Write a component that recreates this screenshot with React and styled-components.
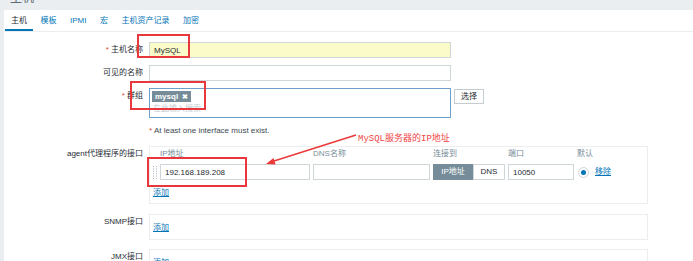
import styled, { createGlobalStyle } from "styled-components";

const GlobalStyle = createGlobalStyle`
  html, body {
    margin: 0;
    padding: 0;
    background: #ebeef0;
  }
  body {
    font-family: "Liberation Sans", Arial, "Noto Sans CJK SC", sans-serif;
    font-size: 8px;
    color: #1f2c33;
  }
`;

const tabs = ["主机", "模板", "IPMI", "宏", "主机资产记录", "加密"];

const columns = [
  { key: "handle", title: "" },
  { key: "ip", title: "IP地址" },
  { key: "dns", title: "DNS名称" },
  { key: "conn", title: "连接到" },
  { key: "port", title: "端口" },
  { key: "def", title: "默认" },
];

function DragHandle() {
  const dots = [];
  for (let r = 0; r < 6; r++) {
    for (let c = 0; c < 2; c++) {
      dots.push(<rect key={r + "-" + c} x={c * 3} y={r * 2.4} width="1" height="1" fill="#a9b6bd" />);
    }
  }
  return (
    <HandleSvg width="4" height="13" viewBox="0 0 4 13">
      {dots}
    </HandleSvg>
  );
}

export default function App() {
  return (
    <Page>
      <GlobalStyle />
      <PageTitle>
        <span>主机</span>
      </PageTitle>
      <Panel>
        <TabBar>
          {tabs.map((t, i) => (
            <Tab key={t} $active={i === 0}>
              {t}
            </Tab>
          ))}
        </TabBar>

        <Form>
          {/* 主机名称 */}
          <Row>
            <Label>
              <Star>*</Star> 主机名称
            </Label>
            <TextInput $highlight defaultValue="MySQL" readOnly />
          </Row>

          {/* 可见的名称 */}
          <Row $mt={7}>
            <Label>可见的名称</Label>
            <TextInput defaultValue="" readOnly />
          </Row>

          {/* 群组 */}
          <Row $mt={7}>
            <Label>
              <Star>*</Star> 群组
            </Label>
            <GroupField>
              <MultiSelect>
                <Tag>
                  mysql <span>✖</span>
                </Tag>
                <Placeholder>在此输入搜索</Placeholder>
              </MultiSelect>
              <SelectButton>选择</SelectButton>
            </GroupField>
          </Row>

          <Row $mt={8}>
            <span />
            <ErrorText>
              <Star>*</Star> At least one interface must exist.
            </ErrorText>
          </Row>

          {/* agent 接口 */}
          <Row $mt={10}>
            <Label>agent代理程序的接口</Label>
            <InterfaceBox>
              <InterfaceGrid>
                {columns.map((c) => (
                  <ColHead key={c.key}>{c.title}</ColHead>
                ))}
                <DragHandle />
                <TextInput $w={150} defaultValue="192.168.189.208" readOnly />
                <TextInput $w={117} defaultValue="" readOnly />
                <Toggle>
                  <ToggleItem $active $w={40}>
                    IP地址
                  </ToggleItem>
                  <ToggleItem $w={32}>DNS</ToggleItem>
                </Toggle>
                <TextInput $w={66} defaultValue="10050" readOnly />
                <DefaultCell>
                  <Radio />
                  <Link>移除</Link>
                </DefaultCell>
              </InterfaceGrid>
              <AddLink $mt={8}>添加</AddLink>
            </InterfaceBox>
          </Row>

          <Row $mt={10}>
            <Label>SNMP接口</Label>
            <EmptyBox>
              <AddLink>添加</AddLink>
            </EmptyBox>
          </Row>

          <Row $mt={9}>
            <Label>JMX接口</Label>
            <EmptyBox>
              <AddLink>添加</AddLink>
            </EmptyBox>
          </Row>
        </Form>
      </Panel>

      {/* 红色标注 */}
      <RedBox $x={137} $y={34} $w={53} $h={24} />
      <RedBox $x={130} $y={81} $w={76} $h={29} />
      <RedBox $x={147} $y={157} $w={100} $h={30} />
      <ArrowLayer width="693" height="261" viewBox="0 0 693 261">
        <line x1="356" y1="135" x2="274" y2="161" stroke="#ec3a3a" strokeWidth="1.6" />
        <polygon points="266,164 275.6,164.6 273.5,157.9" fill="#ec3a3a" />
      </ArrowLayer>
      <Note>MySQL服务器的IP地址</Note>
    </Page>
  );
}

const Page = styled.div`
  position: relative;
  width: 693px;
  height: 261px;
  overflow: hidden;
  display: flex;
  flex-direction: column;
`;

const PageTitle = styled.div`
  flex-shrink: 0;
  height: 10px;
  overflow: hidden;
  padding-left: 10px;
  span {
    display: block;
    margin-top: -8px;
    font-size: 12px;
    line-height: 12px;
    color: #5d6b73;
  }
`;

const Panel = styled.div`
  flex: 1 0 auto;
  margin-left: 4px;
  background: #fff;
`;

const TabBar = styled.div`
  display: flex;
  align-items: flex-start;
  gap: 1.5px;
  height: 22px;
  padding-left: 1px;
  border-bottom: 1px solid #ebeef0;
  box-sizing: border-box;
`;

const Tab = styled.div`
  height: 21px;
  box-sizing: border-box;
  padding: 6px 6px 0;
  line-height: 10px;
  white-space: nowrap;
  color: ${(p) => (p.$active ? "#1f2c33" : "#0275b8")};
  border-bottom: 2px solid ${(p) => (p.$active ? "#0275b8" : "transparent")};
`;

const Form = styled.div`
  display: flex;
  flex-direction: column;
  padding-top: 10px;
`;

const Row = styled.div`
  display: grid;
  grid-template-columns: 139px auto;
  column-gap: 6px;
  align-items: start;
  margin-top: ${(p) => p.$mt || 0}px;
`;

const Label = styled.div`
  text-align: right;
  line-height: 16px;
  white-space: nowrap;
  color: #1f2c33;
`;

const Star = styled.span`
  color: #e54335;
`;

const TextInput = styled.input`
  width: ${(p) => p.$w || 302}px;
  height: 16px;
  box-sizing: border-box;
  margin: 0;
  padding: 0 4px;
  border: 1px solid #cfd6da;
  background: ${(p) => (p.$highlight ? "#fbfbc9" : "#fff")};
  font-family: inherit;
  font-size: 8px;
  color: #1f2c33;
  outline: none;
`;

const GroupField = styled.div`
  display: flex;
  align-items: flex-start;
  gap: 3px;
`;

const MultiSelect = styled.div`
  width: 302px;
  height: 30px;
  box-sizing: border-box;
  padding: 2px;
  border: 1px solid #6e9fcb;
`;

const Tag = styled.span`
  display: inline-flex;
  align-items: center;
  gap: 4px;
  height: 11px;
  padding: 0 3px;
  background: #768d99;
  color: #fff;
  font-weight: bold;
  line-height: 11px;
  span {
    font-size: 7px;
  }
`;

const Placeholder = styled.div`
  margin-top: 2px;
  padding-left: 1px;
  line-height: 10px;
  color: #c3ccd0;
`;

const SelectButton = styled.button`
  height: 15px;
  margin: 1px 0 0;
  padding: 0 6px;
  border: 1px solid #c2ccd1;
  background: #fff;
  font-family: inherit;
  font-size: 8px;
  line-height: 13px;
  color: #1f2c33;
`;

const ErrorText = styled.div`
  line-height: 10px;
  color: #3b4a52;
`;

const InterfaceBox = styled.div`
  display: flex;
  flex-direction: column;
  width: 499px;
  box-sizing: border-box;
  padding: 2px 3px 5px;
  border: 1px solid #ebeef0;
`;

const InterfaceGrid = styled.div`
  display: grid;
  grid-template-columns: 4px 150px 117px 72px 66px auto;
  column-gap: 3px;
  row-gap: 5px;
  align-items: center;
`;

const ColHead = styled.div`
  line-height: 10px;
  color: #768d99;
  white-space: nowrap;
`;

const HandleSvg = styled.svg`
  display: block;
`;

const Toggle = styled.div`
  display: flex;
  height: 16px;
`;

const ToggleItem = styled.div`
  width: ${(p) => p.$w}px;
  box-sizing: border-box;
  line-height: 14px;
  text-align: center;
  border: 1px solid ${(p) => (p.$active ? "#768d99" : "#cfd6da")};
  background: ${(p) => (p.$active ? "#768d99" : "#fff")};
  color: ${(p) => (p.$active ? "#fff" : "#1f2c33")};
`;

const DefaultCell = styled.div`
  display: flex;
  align-items: center;
  gap: 6px;
  padding-left: 1px;
`;

const Radio = styled.span`
  position: relative;
  width: 11px;
  height: 11px;
  box-sizing: border-box;
  border: 1px solid #cfd6da;
  border-radius: 50%;
  &::after {
    content: "";
    position: absolute;
    left: 2px;
    top: 2px;
    width: 5px;
    height: 5px;
    border-radius: 50%;
    background: #0275b8;
  }
`;

const Link = styled.span`
  color: #0275b8;
  text-decoration: underline;
  line-height: 10px;
`;

const AddLink = styled(Link)`
  display: block;
  margin-top: ${(p) => p.$mt || 0}px;
  align-self: flex-start;
`;

const EmptyBox = styled.div`
  width: 499px;
  box-sizing: border-box;
  padding: 8px 3px 6px;
  border: 1px solid #ebeef0;
`;

const RedBox = styled.div`
  position: absolute;
  left: ${(p) => p.$x}px;
  top: ${(p) => p.$y}px;
  width: ${(p) => p.$w}px;
  height: ${(p) => p.$h}px;
  box-sizing: border-box;
  border: 2px solid #e8383d;
  pointer-events: none;
`;

const ArrowLayer = styled.svg`
  position: absolute;
  left: 0;
  top: 0;
  pointer-events: none;
`;

const Note = styled.div`
  position: absolute;
  left: 358px;
  top: 133px;
  font-family: "Liberation Mono", "Noto Sans CJK SC", monospace;
  font-size: 9px;
  line-height: 12px;
  color: #ef4444;
  white-space: nowrap;
`;
